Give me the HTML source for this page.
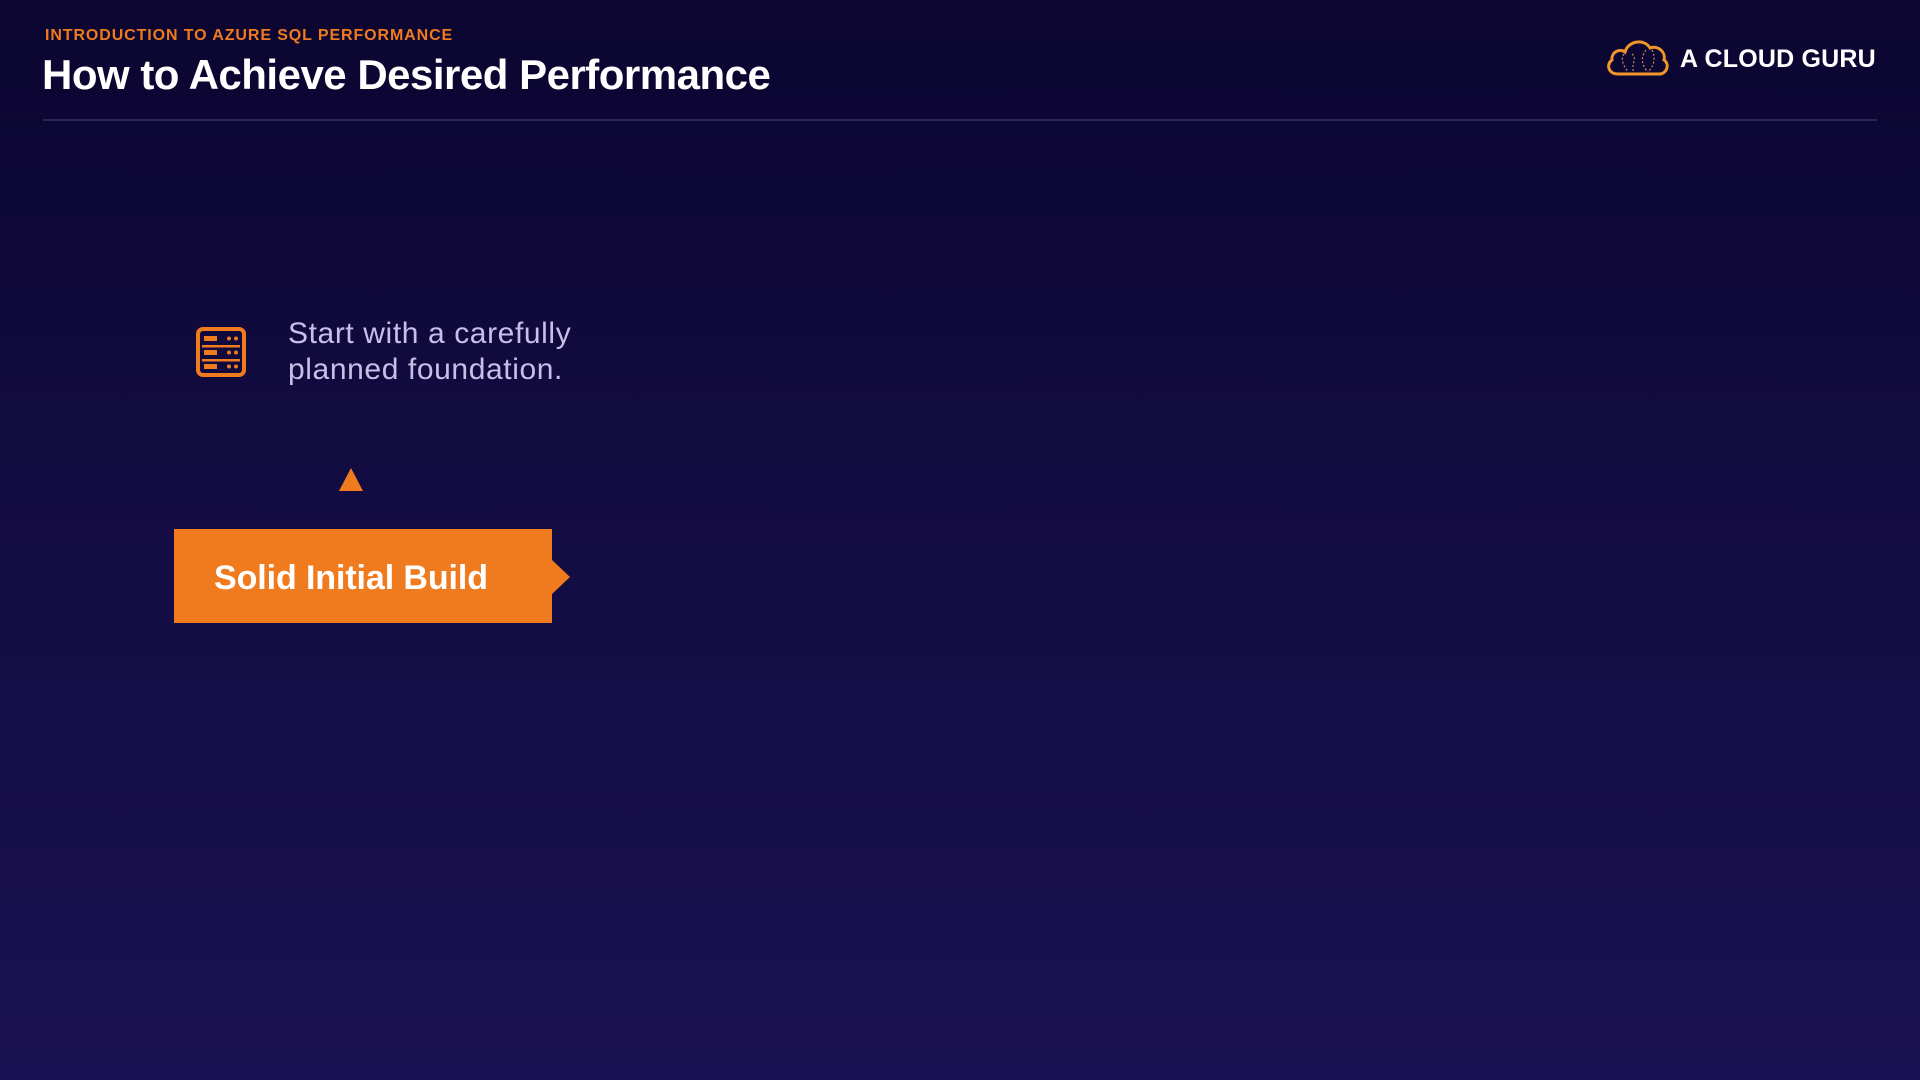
<!DOCTYPE html>
<html><head><style>
html,body{margin:0;padding:0}
body{width:1920px;height:1080px;position:relative;overflow:hidden;background:linear-gradient(180deg,#0b0530 0%,#130c42 45%,#1a1152 100%);font-family:"Liberation Sans",sans-serif}
.a{position:absolute;white-space:nowrap}
</style></head><body>
<div class="a" style="left:45px;top:27px;font-size:16px;font-weight:bold;color:#f07a1e;letter-spacing:0.9px">INTRODUCTION TO AZURE SQL PERFORMANCE</div>
<div class="a" style="left:42px;top:51px;font-size:42px;font-weight:bold;color:#fff;letter-spacing:-0.5px">How to Achieve Desired Performance</div>
<div class="a" style="left:43px;top:119px;width:1834px;height:2px;background:#2a2458"></div>
<svg class="a" style="left:1604px;top:36px" width="66" height="42" viewBox="0 0 66 42">
<path d="M14 38 C4 38 2 28 8 24 C7 16 16 12 21 16 C24 5 40 2 46 12 C54 9 62 16 60 24 C66 28 63 38 55 38 Z" fill="none" stroke="#f0962a" stroke-width="3"/>
<path d="M20 18 C16 24 20 30 24 36 M28 18 C34 22 26 30 30 36 M42 14 C36 22 38 30 44 36 M48 14 C52 22 50 30 44 36" fill="none" stroke="#d08a5a" stroke-width="1.2" stroke-dasharray="2 2"/>
</svg>
<div class="a" style="left:1680px;top:45px;font-size:25px;font-weight:bold;color:#fff;letter-spacing:0.2px">A CLOUD GURU</div>
<svg class="a" style="left:196px;top:327px" width="50" height="50" viewBox="0 0 50 50">
<rect x="2" y="2" width="46" height="46" rx="5" fill="none" stroke="#f07a1e" stroke-width="4"/>
<g fill="#f07a1e">
<rect x="8" y="9" width="13" height="5"/><circle cx="33" cy="11.5" r="2"/><circle cx="40" cy="11.5" r="2"/>
<rect x="6" y="18" width="38" height="2.5"/>
<rect x="8" y="23" width="13" height="5"/><circle cx="33" cy="25.5" r="2"/><circle cx="40" cy="25.5" r="2"/>
<rect x="6" y="32" width="38" height="2.5"/>
<rect x="8" y="37" width="13" height="5"/><circle cx="33" cy="39.5" r="2"/><circle cx="40" cy="39.5" r="2"/>
</g></svg>
<div class="a" style="left:288px;top:316px;font-size:30px;line-height:36px;color:#c6bfe8;letter-spacing:0.6px">Start with a carefully<br>planned foundation.</div>
<svg class="a" style="left:338px;top:467px" width="26" height="25"><polygon points="13,1 25,24 1,24" fill="#f07a1e"/></svg>
<div class="a" style="left:174px;top:529px;width:378px;height:94px;background:#f07a1e"></div>
<svg class="a" style="left:551px;top:559px" width="20" height="36"><polygon points="0,0 19,18 0,36" fill="#f07a1e"/></svg>
<div class="a" style="left:214px;top:559px;font-size:34px;font-weight:bold;color:#fff;letter-spacing:-0.1px">Solid Initial Build</div>
</body></html>
